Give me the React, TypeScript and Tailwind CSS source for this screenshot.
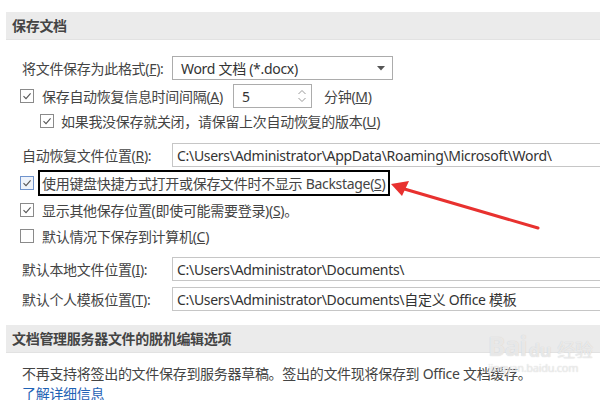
import React from "react";

const font = "font-['Noto_Sans','Noto_Sans_CJK_SC',sans-serif]";

function Check({ checked, focus }: { checked: boolean; focus?: boolean }) {
  return (
    <div
      className={
        "w-[14px] h-[14px] border flex items-center justify-center shrink-0 " +
        (focus ? "border-[#6f93cc] bg-[#eef3fb]" : "border-[#8a8a8a] bg-white")
      }
    >
      {checked && (
        <svg width="10" height="10" viewBox="0 0 10 10">
          <polyline points="1.5,5.2 4,7.6 8.6,2.4" fill="none" stroke="#555" strokeWidth="1.1" />
        </svg>
      )}
    </div>
  );
}

function PathBox({ text }: { text: React.ReactNode }) {
  return (
    <div className="h-6 w-[460px] shrink-0 border border-[#c6c6c6] bg-white flex items-center pl-[4px] text-[#333] whitespace-nowrap">
      {text}
    </div>
  );
}

export default function App() {
  return (
    <div
      className={
        "relative w-[600px] h-[400px] overflow-hidden bg-white text-[14px] tracking-[-0.3px] text-[#444] whitespace-nowrap " +
        font
      }
    >
      <div className="pt-3">
        <div className="ml-[6px] h-7 bg-[#ebebeb] border-b border-[#e2e2e2] flex items-center pl-[6px] font-bold text-[#444]">
          保存文档
        </div>

        <div className="mt-4 h-6 flex items-center pl-[22px]">
          <span className="w-[150px] shrink-0">
            将文件保存为此格式(<u>F</u>):
          </span>
          <div className="w-[221px] h-6 border border-[#acacac] flex items-center justify-between pl-[8px] pr-[7px] text-[#333]">
            <span>Word 文档 (*.docx)</span>
            <svg width="8" height="5" viewBox="0 0 8 5">
              <polygon points="0,0 8,0 4,4.5" fill="#555" />
            </svg>
          </div>
        </div>

        <div className="mt-1 h-6 flex items-center pl-[20px]">
          <Check checked />
          <span className="ml-[8px] w-[191px] shrink-0">
            保存自动恢复信息时间间隔(<u>A</u>)
          </span>
          <div className="w-[79px] h-6 shrink-0 border border-[#acacac] flex items-center justify-between pl-[8px] pr-[4px] text-[#333]">
            <span>5</span>
            <svg width="10" height="16" viewBox="0 0 10 16">
              <polyline points="1.5,6 5,2.5 8.5,6" fill="none" stroke="#9a9a9a" strokeWidth="1" />
              <polyline points="1.5,10 5,13.5 8.5,10" fill="none" stroke="#9a9a9a" strokeWidth="1" />
            </svg>
          </div>
          <span className="ml-[12px]">
            分钟(<u>M</u>)
          </span>
        </div>

        <div className="h-[26px] flex items-center pl-[40px]">
          <Check checked />
          <span className="ml-[7px]">
            如果我没保存就关闭，请保留上次自动恢复的版本(<u>U</u>)
          </span>
        </div>

        <div className="mt-[9px] h-6 flex items-center pl-[22px]">
          <span className="w-[150px] shrink-0">
            自动恢复文件位置(<u>R</u>):
          </span>
          <PathBox text="C:\Users\Administrator\AppData\Roaming\Microsoft\Word\" />
        </div>

        <div className="mt-[3px] h-[26px] flex items-center pl-[20px]">
          <Check checked focus />
          <div className="ml-[4px] h-[26px] border-2 border-black flex items-center pl-[2px] pr-[3px]">
            使用键盘快捷方式打开或保存文件时不显示 Backstage(<u>S</u>)
          </div>
        </div>

        <div className="h-[28px] flex items-center pl-[20px]">
          <Check checked />
          <span className="ml-[8px]">
            显示其他保存位置(即使可能需要登录)(<u>S</u>)。
          </span>
        </div>

        <div className="h-6 flex items-center pl-[20px]">
          <Check checked={false} />
          <span className="ml-[8px]">
            默认情况下保存到计算机(<u>C</u>)
          </span>
        </div>

        <div className="mt-[9px] h-6 flex items-center pl-[22px]">
          <span className="w-[150px] shrink-0">
            默认本地文件位置(<u>I</u>):
          </span>
          <PathBox text="C:\Users\Administrator\Documents\" />
        </div>

        <div className="mt-[6px] h-6 flex items-center pl-[22px]">
          <span className="w-[150px] shrink-0">
            默认个人模板位置(<u>T</u>):
          </span>
          <PathBox text="C:\Users\Administrator\Documents\自定义 Office 模板" />
        </div>

        <div className="mt-[14px] ml-[6px] h-7 bg-[#ebebeb] border-b border-[#e2e2e2] flex items-center pl-[6px] font-bold text-[#444]">
          文档管理服务器文件的脱机编辑选项
        </div>

        <div className="mt-[10px] h-5 flex items-center pl-[22px]">
          不再支持将签出的文件保存到服务器草稿。签出的文件现将保存到 Office 文档缓存。
        </div>
        <div className="h-5 flex items-center pl-[22px] text-[#1f63b5]">了解详细信息</div>
      </div>

      {/* red annotation arrow */}
      <svg className="absolute left-0 top-0 pointer-events-none" width="600" height="400" viewBox="0 0 600 400">
        <line x1="401" y1="188" x2="538" y2="228" stroke="#e8312f" strokeWidth="3" strokeLinecap="round" />
        <polygon points="391,184 409,181 402,196" fill="#e8312f" />
      </svg>

      {/* watermark */}
      <div className="absolute left-[488px] top-[333px] pointer-events-none select-none leading-none text-white/60 [text-shadow:0_0_1px_#c4c4c4]">
        <div className="flex items-end gap-[2px]">
          <span className="text-[26px] font-bold tracking-tight">Bai</span>
          <span className="text-[18px] font-bold">du</span>
          <span className="text-[18px] ml-[4px]">经验</span>
        </div>
        <div className="text-[11px] mt-[3px]">jingyan.baidu.com</div>
      </div>
    </div>
  );
}
